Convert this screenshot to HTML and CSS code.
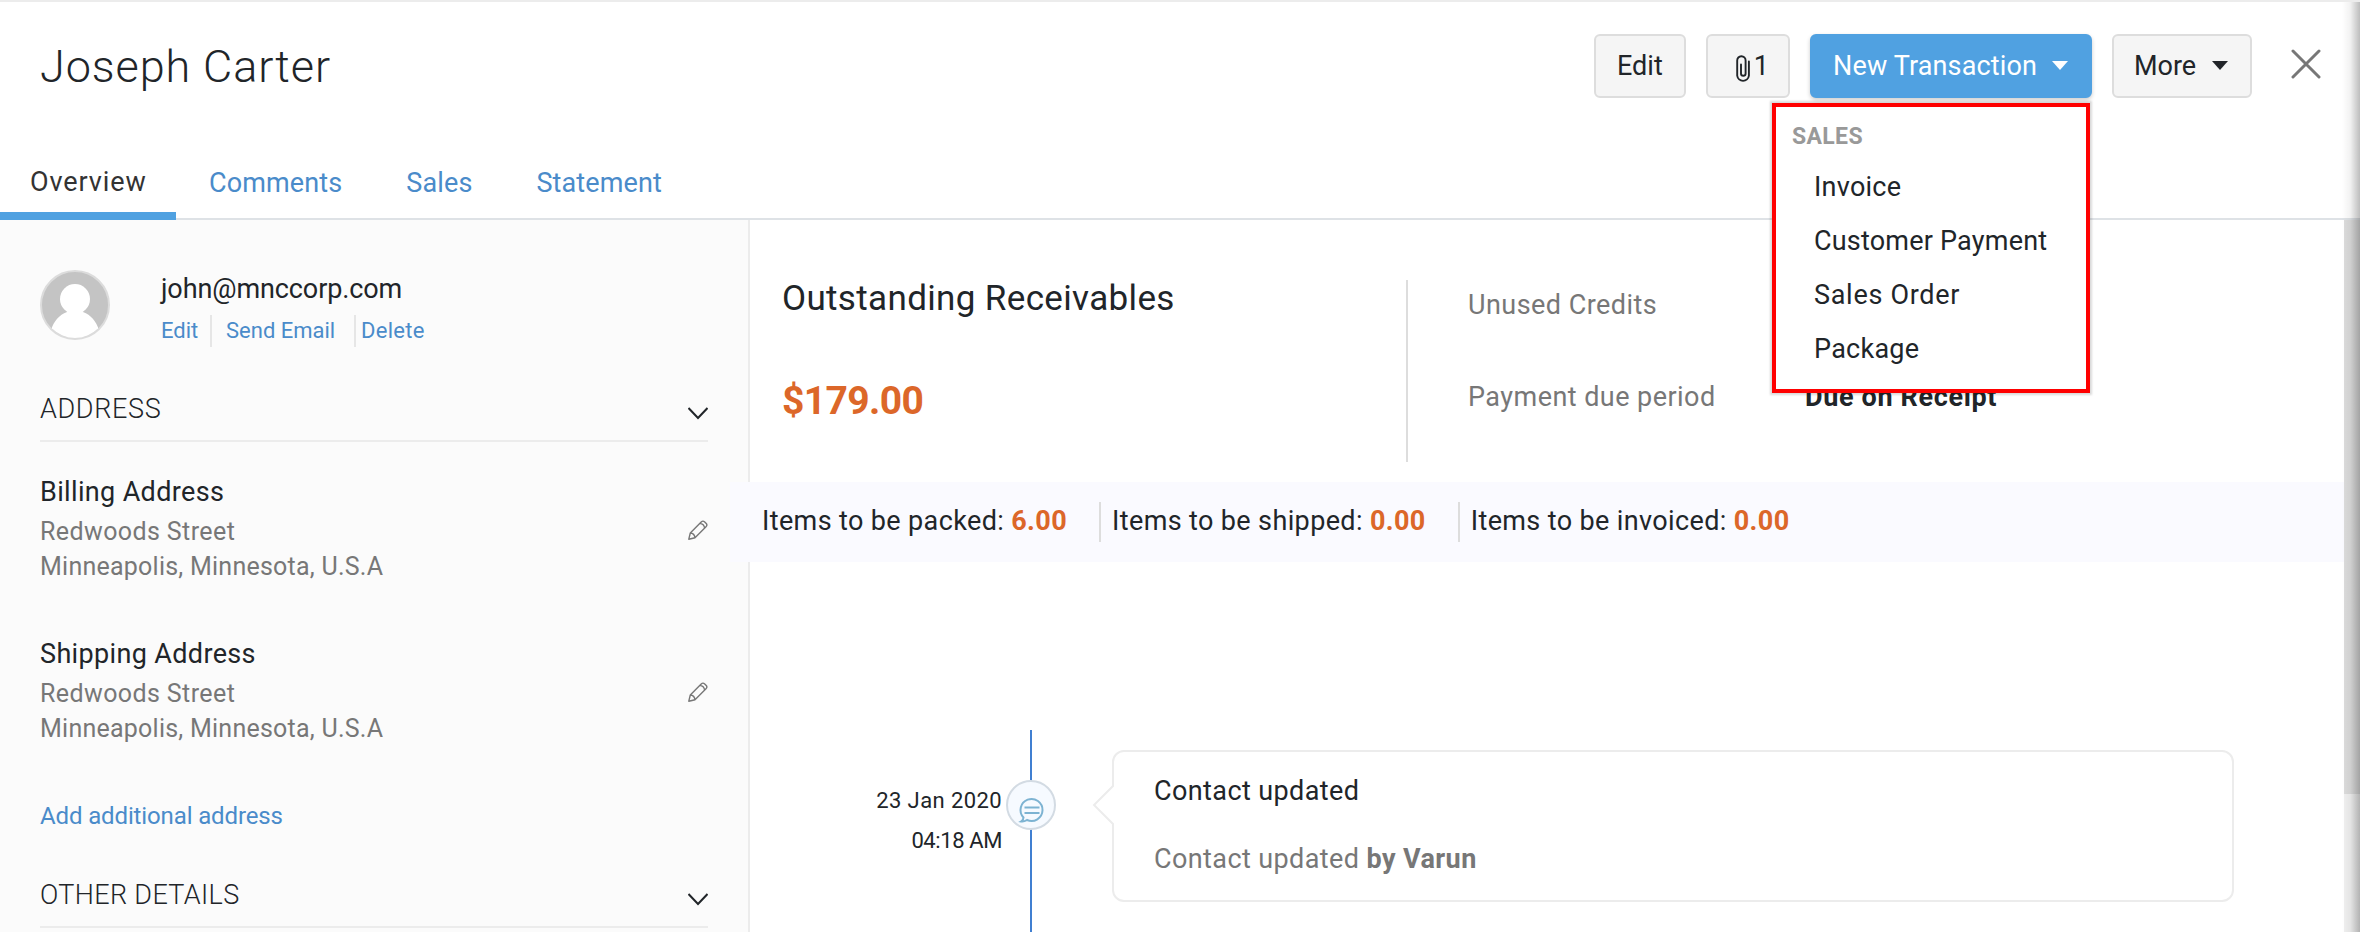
FILE: index.html
```html
<!DOCTYPE html>
<html lang="en">
<head>
<meta charset="utf-8">
<title>Joseph Carter</title>
<link rel="stylesheet" href="styles.css">
</head>
<body>
<div class="page">
  <header class="header">
    <div class="title-row">
      <h1 class="name">Joseph Carter</h1>
      <div class="actions">
        <button class="btn btn-edit">Edit</button>
        <button class="btn btn-attach">
          <svg class="clip" width="14" height="28" viewBox="0 0 14 28" fill="none" stroke="#212529" stroke-width="1.900" stroke-linecap="round"><path d="M5 9.500v9a2.300 2.300 0 0 0 4.600 0V5.500a4.200 4.200 0 0 0-4.300-4.300A4.200 4.200 0 0 0 1.200 5.500v15.200a5.900 5.900 0 0 0 11.700 0V6.500"/></svg><span>1</span>
        </button>
        <div class="menu-anchor">
          <button class="btn btn-primary"><span>New Transaction</span><span class="caret"></span></button>
          <div class="menu">
            <div class="menu-title">SALES</div>
            <div class="menu-item">Invoice</div>
            <div class="menu-item menu-item-payment">Customer Payment</div>
            <div class="menu-item menu-item-order">Sales Order</div>
            <div class="menu-item">Package</div>
          </div>
        </div>
        <button class="btn btn-more"><span>More</span><span class="caret"></span></button>
        <svg class="close" width="30" height="30" viewBox="0 0 30 30" fill="none" stroke="#777" stroke-width="3" stroke-linecap="round"><path d="M2 2l26 26M28 2L2 28"/></svg>
      </div>
    </div>
    <nav class="tabs">
      <a class="tab tab-active">Overview</a>
      <a class="tab">Comments</a>
      <a class="tab">Sales</a>
      <a class="tab">Statement</a>
    </nav>
  </header>
  <div class="body">
    <aside class="side">
      <div class="contact">
        <svg class="avatar" width="70" height="70" viewBox="0 0 70 70"><defs><clipPath id="disc"><circle cx="35" cy="35" r="33"/></clipPath></defs><circle cx="35" cy="35" r="34" fill="#c4c4c4" stroke="#dcdcdc" stroke-width="2"/><g clip-path="url(#disc)" fill="#fff"><circle cx="35" cy="29" r="15"/><path d="M28 40h14l1 2c8 3 13 9 16 18v10H11V60c3-9 8-15 16-18z"/></g></svg>
        <div class="contact-info">
          <div class="email">john@mnccorp.com</div>
          <div class="links"><a class="l1">Edit</a><a class="l2">Send Email</a><a class="l3">Delete</a></div>
        </div>
      </div>
      <div class="section"><span>ADDRESS</span><svg class="chev" width="20" height="13" viewBox="0 0 20 13" fill="none" stroke="#212529" stroke-width="2"><path d="M.5 1l9.500 10L19.500 1"/></svg></div>
      <div class="address">
        <div class="addr-title">Billing Address</div>
        <div class="addr-line addr-edit"><span class="street">Redwoods Street</span><svg class="pencil" width="20" height="20" viewBox="0 0 20 20" fill="none" stroke="#777" stroke-width="1.400" stroke-linejoin="round"><path d="M.8 19.200l1.500-6.200L13.200 2c1.100-1.100 2.400-1.100 3.500 0l1.300 1.300c1.100 1.100 1.100 2.400 0 3.500L7 17.700zM11.800 3.400c2.800.3 4.500 2 4.800 4.800M2.300 13c2.600.2 4.400 2 4.700 4.700"/></svg></div>
        <div class="addr-line">Minneapolis, Minnesota, U.S.A</div>
      </div>
      <div class="address">
        <div class="addr-title">Shipping Address</div>
        <div class="addr-line addr-edit"><span class="street">Redwoods Street</span><svg class="pencil" width="20" height="20" viewBox="0 0 20 20" fill="none" stroke="#777" stroke-width="1.400" stroke-linejoin="round"><path d="M.8 19.200l1.500-6.200L13.200 2c1.100-1.100 2.400-1.100 3.500 0l1.300 1.300c1.100 1.100 1.100 2.400 0 3.500L7 17.700zM11.800 3.400c2.800.3 4.500 2 4.800 4.800M2.300 13c2.600.2 4.400 2 4.700 4.700"/></svg></div>
        <div class="addr-line">Minneapolis, Minnesota, U.S.A</div>
      </div>
      <a class="add-address">Add additional address</a>
      <div class="section section-other"><span>OTHER DETAILS</span><svg class="chev" width="20" height="13" viewBox="0 0 20 13" fill="none" stroke="#212529" stroke-width="2"><path d="M.5 1l9.500 10L19.500 1"/></svg></div>
    </aside>
    <main class="main">
      <div class="summary">
        <div class="receivables">
          <div class="rec-title">Outstanding Receivables</div>
          <div class="rec-amount">$179.00</div>
        </div>
        <div class="credits">
          <div class="credit-row"><span>Unused Credits</span></div>
          <div class="credit-row"><span class="credit-label">Payment due period</span><b class="due">Due on Receipt</b></div>
        </div>
      </div>
      <div class="strip">
        <div class="strip-item"><span>Items to be packed: </span><b>6.00</b></div>
        <div class="strip-item"><span>Items to be shipped: </span><b>0.00</b></div>
        <div class="strip-item"><span>Items to be invoiced: </span><b>0.00</b></div>
      </div>
      <div class="timeline">
        <div class="when"><div class="date">23 Jan 2020</div><div class="time">04:18 AM</div></div>
        <div class="rail">
          <svg class="node" width="50" height="50" viewBox="0 0 50 50" fill="none"><circle cx="25" cy="25" r="24" fill="#f6faff" stroke="#d3dbe3" stroke-width="2"/><g stroke="#7db3d2" stroke-width="2"><path d="M17.500 37.500a11 11 0 1 1 3.500 2.500q-3 2-6 1.500 2.500-1.500 2.500-4z"/><path d="M18.500 27.500h15M18.500 33h15"/></g></svg>
        </div>
        <div class="card">
          <svg class="arrow" width="22" height="42" viewBox="0 0 22 42" fill="#fff" stroke="#ececec" stroke-width="2"><path d="M22 1L2 21l20 20"/></svg>
          <div>Contact updated</div>
          <div class="card-text">Contact updated <b>by Varun</b></div>
        </div>
      </div>
    </main>
  </div>
  <div class="scrollbar"><div class="thumb"></div></div>
  <div class="edge"></div>
</div>
</body>
</html>
```
FILE: styles.css
```css
* { box-sizing: border-box; }
body { margin: 0; overflow: hidden; font-family: Roboto, "Liberation Sans", sans-serif; font-size: 27px; color: #212529; }
.page { position: relative; width: 2360px; height: 932px; background: #fff; overflow: hidden; display: flex; flex-direction: column; }
.header { height: 220px; border-top: 2px solid #ececec; border-bottom: 2px solid #dee2e6; display: flex; flex-direction: column; justify-content: space-between; }
.title-row { display: flex; justify-content: space-between; padding: 32px 39px 0 40px; }
.name { margin: 6px 0 0; font-size: 45px; line-height: 54px; font-weight: 300; letter-spacing: 0.900px; }
.actions { display: flex; height: 64px; }
.btn { height: 64px; border: 2px solid #ddd; border-radius: 6px; background: #f5f5f5; font: inherit; color: inherit; padding: 0 20px 1px; display: flex; align-items: center; justify-content: space-between; line-height: 32px; }
.btn-edit { width: 92px; margin-right: 20px; padding-left: 21px; }
.btn-attach { width: 84px; margin-right: 20px; padding-left: 28px; padding-right: 19px; }
.clip { margin-top: 6px; }
.menu-anchor { position: relative; margin-right: 20px; }
.btn-primary { width: 282px; background: #50a1e1; border-color: #50a1e1; color: #fff; padding-left: 21px; padding-right: 22px; letter-spacing: 0.150px; box-shadow: 0 2px 4px rgba(0,0,0,.2); }
.btn-more { width: 140px; margin-right: 39px; padding-right: 22px; }
.caret { border: 8px solid transparent; border-top: 9px solid currentColor; border-bottom: 0; }
.close { margin-top: 15px; }
.menu { position: absolute; z-index: 5; left: -38px; top: 69px; width: 318px; height: 290px; background: #fff; border: 4px solid #f00; padding: 15px 16px; box-shadow: 0 0 2px 2px rgba(0,0,0,.15); }
.menu-title { height: 38px; line-height: 30px; font-size: 23px; font-weight: 700; letter-spacing: 0.350px; color: #999; }
.menu-item { height: 54px; line-height: 55px; padding-left: 22px; white-space: nowrap; letter-spacing: 0.250px; }
.menu-item-order { letter-spacing: 0.700px; }
.menu-item-payment { letter-spacing: 0.200px; }
.tabs { display: flex; height: 86px; margin-bottom: -2px; color: #4a8bca; }
.tab { line-height: 34px; padding-top: 32px; margin-right: 64px; letter-spacing: 0.120px; }
.tab-active { width: 176px; margin-right: 33px; padding: 31px 0 0 30px; border-bottom: 8px solid #50a1e1; color: #333; letter-spacing: 0.900px; }
.body { flex: 1; display: flex; }
.side { width: 750px; background: #fbfbfb; border-right: 2px solid #ececec; padding: 50px 40px 0 40px; }
.contact { display: flex; gap: 51px; }
.email { height: 45px; line-height: 39px; letter-spacing: -0.100px; }
.links { display: flex; font-size: 22px; line-height: 32px; color: #4a8bca; }
.l1 { border-right: 2px solid #e6e6e6; width: 51px; }
.l2 { border-right: 2px solid #e6e6e6; width: 144px; padding-left: 14px; }
.l3 { padding-left: 5px; letter-spacing: 0.300px; }
.section { display: flex; justify-content: space-between; border-bottom: 2px solid #ececec; height: 58px; margin-top: 37px; font-weight: 300; letter-spacing: 0.650px; line-height: 51px; }
.chev { margin-top: 23px; }
.address { margin-top: 34px; height: 128px; }
.addr-title { height: 37px; line-height: 32px; letter-spacing: 0.350px; }
.addr-line { line-height: 35px; height: 36px; font-size: 25px; letter-spacing: 0.240px; color: #777; }
.street { letter-spacing: 0.400px; }
.pencil { margin-top: -3px; }
.addr-edit { display: flex; justify-content: space-between; align-items: center; }
.add-address { display: block; margin-top: 33px; font-size: 24px; letter-spacing: -0.130px; line-height: 35px; color: #4a8bca; }
.section-other { margin-top: 36px; letter-spacing: 0.350px; }
.main { flex: 1; display: flex; flex-direction: column; }
.summary { height: 262px; display: flex; padding: 60px 0 20px 32px; }
.receivables { width: 626px; border-right: 2px solid #ddd; }
.rec-title { font-size: 35px; line-height: 37px; letter-spacing: 0.350px; }
.rec-amount { margin-top: 62px; line-height: 44px; font-size: 39px; font-weight: 700; letter-spacing: -0.600px; color: #dc6729; }
.credits { padding-left: 60px; color: #777; letter-spacing: 0.450px; }
.credit-row { height: 92px; line-height: 51px; display: flex; }
.credit-label { width: 337px; }
.due { color: #212529; font-weight: 700; letter-spacing: 0.650px; }
.strip { position: relative; margin-left: -20px; height: 80px; background: #fafaff; display: flex; padding: 20px 0 20px 32px; line-height: 39px; letter-spacing: 0.370px; }
.strip-item { white-space: pre; padding-right: 32px; margin-right: 11px; border-right: 2px solid #ddd; }
.strip-item:last-child { border: 0; }
.strip b { color: #dc6729; font-weight: 700; }
.timeline { margin-top: 168px; flex: 1; display: flex; }
.when { width: 252px; padding-top: 51px; text-align: right; font-size: 22px; line-height: 40px; }
.date { letter-spacing: 0.400px; }
.time { letter-spacing: -0.400px; }
.rail { width: 110px; background: linear-gradient(#407fd1,#407fd1) 28px 0 / 2px 100% no-repeat; padding: 50px 0 0 4px; }
.card { position: relative; margin-top: 20px; width: 1122px; height: 152px; border: 2px solid #ececec; border-radius: 12px; padding: 20px 40px; line-height: 39px; letter-spacing: 0.400px; }
.arrow { position: absolute; left: -22px; top: 32px; }
.card-text { margin-top: 29px; color: #777; }
.scrollbar { position: absolute; z-index: 6; right: 0; top: 220px; bottom: 0; width: 16px; background: #f1f1f1; }
.thumb { height: 574px; background: #dcdcdc; }
.edge { position: absolute; z-index: 7; right: 0; top: 2px; bottom: 0; width: 18px; background: linear-gradient(90deg, transparent, rgba(0,0,0,.05) 45%, rgba(0,0,0,.26)); }
```
